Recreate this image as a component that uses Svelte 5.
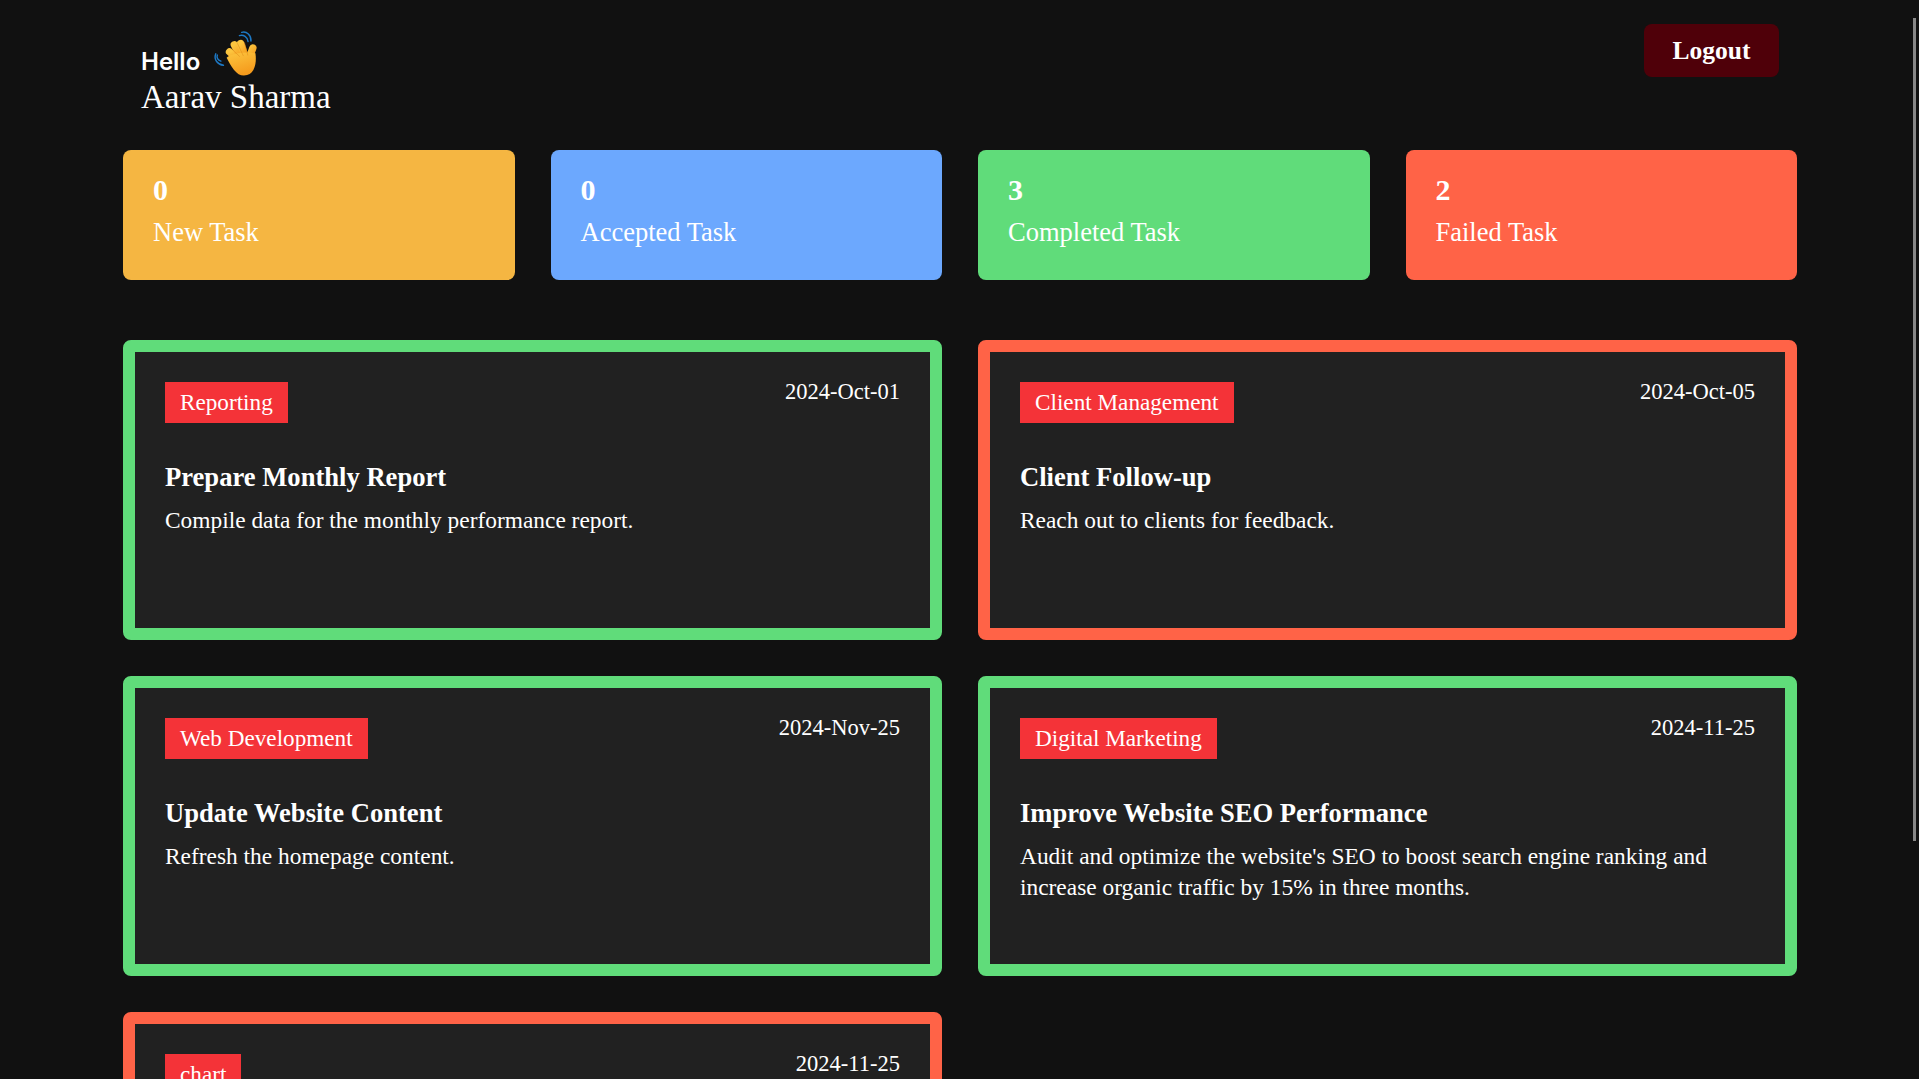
<script lang="ts">
    type Stat = { count: number; label: string; tone: string };
    type Task = {
        category: string;
        date: string;
        title: string;
        description: string;
        tone: string;
    };

    const userName = "Aarav Sharma";

    const stats: Stat[] = [
        { count: 0, label: "New Task", tone: "yellow" },
        { count: 0, label: "Accepted Task", tone: "blue" },
        { count: 3, label: "Completed Task", tone: "green" },
        { count: 2, label: "Failed Task", tone: "red" },
    ];

    const tasks: Task[] = [
        {
            category: "Reporting",
            date: "2024-Oct-01",
            title: "Prepare Monthly Report",
            description: "Compile data for the monthly performance report.",
            tone: "green",
        },
        {
            category: "Client Management",
            date: "2024-Oct-05",
            title: "Client Follow-up",
            description: "Reach out to clients for feedback.",
            tone: "red",
        },
        {
            category: "Web Development",
            date: "2024-Nov-25",
            title: "Update Website Content",
            description: "Refresh the homepage content.",
            tone: "green",
        },
        {
            category: "Digital Marketing",
            date: "2024-11-25",
            title: "Improve Website SEO Performance",
            description:
                "Audit and optimize the website's SEO to boost search engine ranking and increase organic traffic by 15% in three months.",
            tone: "green",
        },
        {
            category: "chart",
            date: "2024-11-25",
            title: "Build Sales Chart",
            description: "Create a chart of the quarterly sales.",
            tone: "red",
        },
    ];
</script>

<div class="page">
    <header class="header">
        <div>
            <div class="hello">
                <span>Hello</span>
                <svg class="wave" viewBox="30 20 150 155" aria-hidden="true">
                    <defs>
                        <linearGradient id="skin" x1="0" y1="0" x2="0.4" y2="1">
                            <stop offset="0" stop-color="#fcc63f" />
                            <stop offset="1" stop-color="#f59b1d" />
                        </linearGradient>
                    </defs>
                    <g fill="none" stroke="#1d78c4" stroke-width="4.5" stroke-linecap="round">
                        <path d="M122 43 C134 39 148 47 149 62" />
                        <path d="M129 33 C145 29 159 41 158 60" />
                        <path d="M64 123 C54 120 50 112 53 104" />
                        <path d="M72 136 C54 134 41 118 48 100" />
                    </g>
                    <g fill="none" stroke="url(#skin)" stroke-width="23" stroke-linecap="round">
                        <path d="M125 125 L91 94" />
                        <path d="M130 118 L106 72" />
                        <path d="M142 115 L126 68" />
                        <path d="M148 125 L164 82" />
                    </g>
                    <path
                        fill="url(#skin)"
                        d="M82 112 C95 100 140 92 172 98 C176 125 172 168 136 168 C112 168 96 140 82 112 Z"
                    />
                    <g fill="none" stroke="#e08a18" stroke-width="1.6" stroke-linecap="round">
                        <path d="M98 85 L122 108" />
                        <path d="M116 68 L134 106" />
                        <path d="M138 66 L148 104" />
                    </g>
                </svg>
            </div>
            <div class="name">{userName}</div>
        </div>
        <button class="logout" type="button">Logout</button>
    </header>

    <section class="stats">
        {#each stats as stat}
            <div class="stat {stat.tone}">
                <div class="count">{stat.count}</div>
                <div class="label">{stat.label}</div>
            </div>
        {/each}
    </section>

    <section class="tasks">
        {#each tasks as task}
            <article class="task {task.tone}">
                <div class="task-top">
                    <span class="tag">{task.category}</span>
                    <span class="date">{task.date}</span>
                </div>
                <h2>{task.title}</h2>
                <p>{task.description}</p>
            </article>
        {/each}
    </section>
</div>

<div class="thumb"></div>

<style>
    :global(body) {
        background: #111111;
        height: 100vh;
        overflow: hidden;
    }

    .page {
        padding: 0 122px 54px 123px;
        color: #ffffff;
        font-family: "Liberation Serif", "Times New Roman", serif;
    }

    .header {
        height: 150px;
        box-sizing: border-box;
        padding: 24px 18px 0 18px;
        display: flex;
        justify-content: space-between;
        align-items: flex-start;
    }

    .hello {
        display: flex;
        align-items: flex-end;
        gap: 10px;
        height: 54px;
        font-family: Inter, "Noto Sans", sans-serif;
        font-size: 24px;
        font-weight: 600;
        line-height: 28px;
    }

    .hello span {
        padding-bottom: 2px;
    }

    .wave {
        width: 48px;
        height: 50px;
    }

    .name {
        font-size: 33px;
        line-height: 38px;
    }

    .logout {
        width: 135px;
        height: 53px;
        border: none;
        border-radius: 8px;
        padding-top: 2px;
        background: #4f0009;
        color: #ffffff;
        font-family: inherit;
        font-size: 25.5px;
        font-weight: 700;
    }

    .stats {
        display: grid;
        grid-template-columns: repeat(4, 1fr);
        gap: 36px;
    }

    .stat {
        height: 130px;
        box-sizing: border-box;
        padding: 22px 30px;
        border-radius: 8px;
    }

    .stat.yellow { background: #f5b642; }
    .stat.blue { background: #6ca8fe; }
    .stat.green { background: #60dc7a; }
    .stat.red { background: #ff6347; }

    .count {
        font-size: 30px;
        font-weight: 700;
        line-height: 36px;
    }

    .label {
        font-size: 26.5px;
        line-height: 36px;
        margin-top: 6px;
    }

    .tasks {
        margin-top: 60px;
        display: grid;
        grid-template-columns: repeat(2, 1fr);
        gap: 36px;
    }

    .task {
        height: 300px;
        box-sizing: border-box;
        padding: 30px;
        border: 12px solid;
        border-radius: 8px;
        background: #212121;
    }

    .task.green { border-color: #60dc7a; }
    .task.red { border-color: #ff6347; }

    .task-top {
        display: flex;
        justify-content: space-between;
        align-items: flex-start;
    }

    .tag {
        height: 41px;
        padding: 0 15px;
        background: #f43338;
        font-size: 23.2px;
        line-height: 41px;
    }

    .date {
        font-size: 22.5px;
        line-height: 20px;
    }

    h2 {
        margin: 34px 0 0;
        font-size: 26.6px;
        font-weight: 700;
        line-height: 40px;
    }

    p {
        margin: 8px 0 0;
        font-size: 23.4px;
        line-height: 31px;
    }

    .thumb {
        position: fixed;
        top: 18px;
        right: 3px;
        width: 3px;
        height: 823px;
        background: #888888;
    }
</style>
